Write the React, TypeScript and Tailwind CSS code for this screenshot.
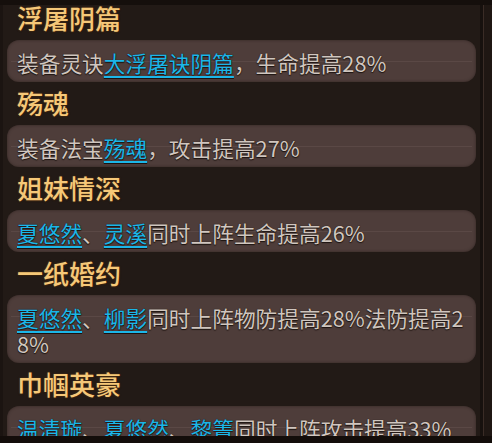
import * as React from "react";

type Seg = { text: string; link?: boolean };

type Bond = Readonly<{
  title: string;
  desc: Seg[];
}>;

const BONDS: Bond[] = [
  {
    title: "浮屠阴篇",
    desc: [{ text: "装备灵诀" }, { text: "大浮屠诀阴篇", link: true }, { text: "，生命提高28%" }],
  },
  {
    title: "殇魂",
    desc: [{ text: "装备法宝" }, { text: "殇魂", link: true }, { text: "，攻击提高27%" }],
  },
  {
    title: "姐妹情深",
    desc: [
      { text: "夏悠然", link: true },
      { text: "、" },
      { text: "灵溪", link: true },
      { text: "同时上阵生命提高26%" },
    ],
  },
  {
    title: "一纸婚约",
    desc: [
      { text: "夏悠然", link: true },
      { text: "、" },
      { text: "柳影", link: true },
      { text: "同时上阵物防提高28%法防提高28%" },
    ],
  },
  {
    title: "巾帼英豪",
    desc: [
      { text: "温清璇", link: true },
      { text: "、" },
      { text: "夏悠然", link: true },
      { text: "、" },
      { text: "黎箐", link: true },
      { text: "同时上阵攻击提高33%" },
    ],
  },
];

const FONT = "font-['Noto_Sans_CJK_SC','Noto_Sans',sans-serif]";

function BondRow({ bond }: { bond: Bond }) {
  return (
    <div>
      <div
        className={`h-[43px] pl-[10px] text-[26px] leading-[41px] font-medium text-[#f6c878] [text-shadow:0_0_2px_#5a3818,0_1px_1px_#2a1a0c] ${FONT}`}
      >
        {bond.title}
      </div>
      <div className="relative rounded-[12px] bg-[#4e3d3a] pl-[10px] pr-[4px] pt-[10px] pb-[6px] shadow-[inset_0_0_3px_rgba(30,20,18,0.6)]">
        {/* seam across the panel */}
        <div className="absolute left-[4px] right-[4px] top-[21px] h-px bg-[#5a4845]" />
        <p
          className={`relative break-all text-[21.7px] leading-[26px] text-[#d0c6bf] [text-shadow:0_1px_1px_#1c1310,0_0_1px_#1c1310] ${FONT}`}
        >
          {bond.desc.map((s, i) =>
            s.link ? (
              <span
                key={i}
                className="text-[#1bb6e8] underline decoration-[#1bb6e8] decoration-[1.5px] underline-offset-[4px]"
              >
                {s.text}
              </span>
            ) : (
              <span key={i}>{s.text}</span>
            )
          )}
        </p>
      </div>
    </div>
  );
}

export default function App() {
  return (
    <div className="flex h-[443px] w-[492px] flex-col overflow-hidden bg-[#221a16]">
      <div className="h-[5px] shrink-0 bg-[#150f0c]" />
      <div className="flex min-h-0 flex-1">
        <div className="w-[3px] shrink-0 bg-[#1b1411]" />
        <div className="min-w-0 flex-1 overflow-hidden pl-[4px] pr-[4px]">
          <div className="-mt-[8px] flex flex-col">
            {BONDS.map((b) => (
              <BondRow key={b.title} bond={b} />
            ))}
          </div>
        </div>
        {/* right frame edge */}
        <div className="flex w-[12px] shrink-0">
          <div className="w-[3px] bg-[#17110e]" />
          <div className="w-px bg-[#3a2c26]" />
          <div className="flex-1 bg-[#1f1713]" />
        </div>
      </div>
      <div className="h-[7px] shrink-0 bg-[#130d0a]" />
    </div>
  );
}
